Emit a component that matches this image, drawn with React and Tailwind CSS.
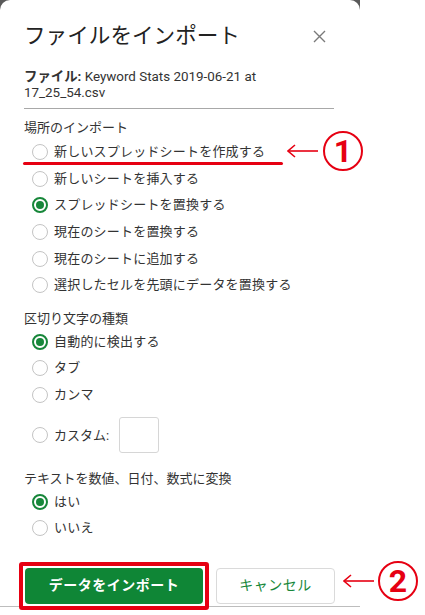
import React from 'react';

const GREEN = '#17873a';

const Radio = ({ checked }) => (
  <span
    className={
      checked
        ? 'flex h-4 w-4 shrink-0 items-center justify-center rounded-full border-2 border-[#17873a]'
        : 'h-4 w-4 shrink-0 rounded-full border border-[#c4c4c4]'
    }
  >
    {checked && <span className="h-[8px] w-[8px] rounded-full bg-[#17873a]" />}
  </span>
);

const Option = ({ label, checked, children }) => (
  <div className="relative flex h-[26.6px] items-center gap-[6px] pl-2 text-[13px] leading-4 tracking-[0.2px] text-[#333]">
    <Radio checked={checked} />
    <span>{label}</span>
    {children}
  </div>
);

const Arrow = () => (
  <svg width="32" height="14" viewBox="0 0 32 14" fill="none" stroke="#e60012" strokeWidth="1.6">
    <path d="M1 7 H31" />
    <path d="M8 1 L1 7 L8 13" />
  </svg>
);

const Circled = ({ n }) => (
  <div className="flex h-[40px] w-[40px] items-center justify-center rounded-full border-[2px] border-[#e60012] text-[32px] font-bold leading-none text-[#e60012]">
    {n}
  </div>
);

const Heading = ({ children, className }) => (
  <div className={`text-[13px] leading-4 text-[#333] ${className}`}>{children}</div>
);

export default function App() {
  return (
    <div className="min-h-[615px] w-[425px] bg-white font-['Roboto','Noto_Sans_CJK_JP',sans-serif]">
      <div className="w-[360px] bg-[linear-gradient(#5a5a5a_0_10px,white_10px)]">
        <div className="relative h-[607px] rounded-t-[10px] border-b border-[#bdbdbd] bg-white pl-6">
          <div className="flex w-[310px] items-center justify-between pt-6">
            <h1 className="text-[21.6px] leading-6 text-[#222]">ファイルをインポート</h1>
            <svg width="13" height="13" viewBox="0 0 13 13" className="mr-[8px]" stroke="#7a7a7a" strokeWidth="1.4">
              <path d="M1 1 L12 12 M12 1 L1 12" />
            </svg>
          </div>

          <div className="mt-[21px] w-[310px] border-b border-[#a8a8a8] pb-[7px] text-[13.4px] leading-4 text-[#333]">
            <span className="font-bold">ファイル:</span> Keyword Stats 2019-06-21 at
            <br />
            17_25_54.csv
          </div>

          <Heading className="mt-[11px]">場所のインポート</Heading>
          <div className="mt-[3px]">
            <Option label="新しいスプレッドシートを作成する">
              <div className="absolute left-[-1px] top-[23px] h-[3px] w-[260px] rounded-full bg-[#e60012]" />
              <div className="absolute left-[263px] top-[-8px] flex items-center gap-[4px]">
                <Arrow />
                <Circled n="1" />
              </div>
            </Option>
            <Option label="新しいシートを挿入する" />
            <Option label="スプレッドシートを置換する" checked />
            <Option label="現在のシートを置換する" />
            <Option label="現在のシートに追加する" />
            <Option label="選択したセルを先頭にデータを置換する" />
          </div>

          <Heading className="mt-[12px]">区切り文字の種類</Heading>
          <div className="mt-[2px]">
            <Option label="自動的に検出する" checked />
            <Option label="タブ" />
            <Option label="カンマ" />
          </div>
          <div className="mt-[9px] flex h-[36px] items-center gap-[6px] pl-2 text-[13px] text-[#333]">
            <Radio />
            <span>カスタム:</span>
            <div className="ml-[4px] h-[36px] w-[40px] rounded-[3px] border border-[#d6d6d6]" />
          </div>

          <Heading className="mt-[18px]">テキストを数値、日付、数式に変換</Heading>
          <div className="mt-[1px]">
            <Option label="はい" checked />
            <Option label="いいえ" />
          </div>

          <div className="mt-[26px] flex items-center gap-[13px] pl-px">
            <div className="relative">
              <div className="absolute -inset-[6px] rounded-[3px] border-[4px] border-[#e60012]" />
              <button className="relative h-[36px] w-[178px] rounded-[4px] bg-[#0f8636] text-[14px] font-bold tracking-[0.5px] text-white">
                データをインポート
              </button>
            </div>
            <button
              className="h-[36px] w-[119px] rounded-[4px] border border-[#dadada] bg-white text-[14px] tracking-[0.5px]"
              style={{ color: GREEN }}
            >
              キャンセル
            </button>
            <div className="absolute left-[343px] top-[561px] flex items-center gap-[3px]">
              <Arrow />
              <Circled n="2" />
            </div>
          </div>
        </div>
      </div>
    </div>
  );
}
